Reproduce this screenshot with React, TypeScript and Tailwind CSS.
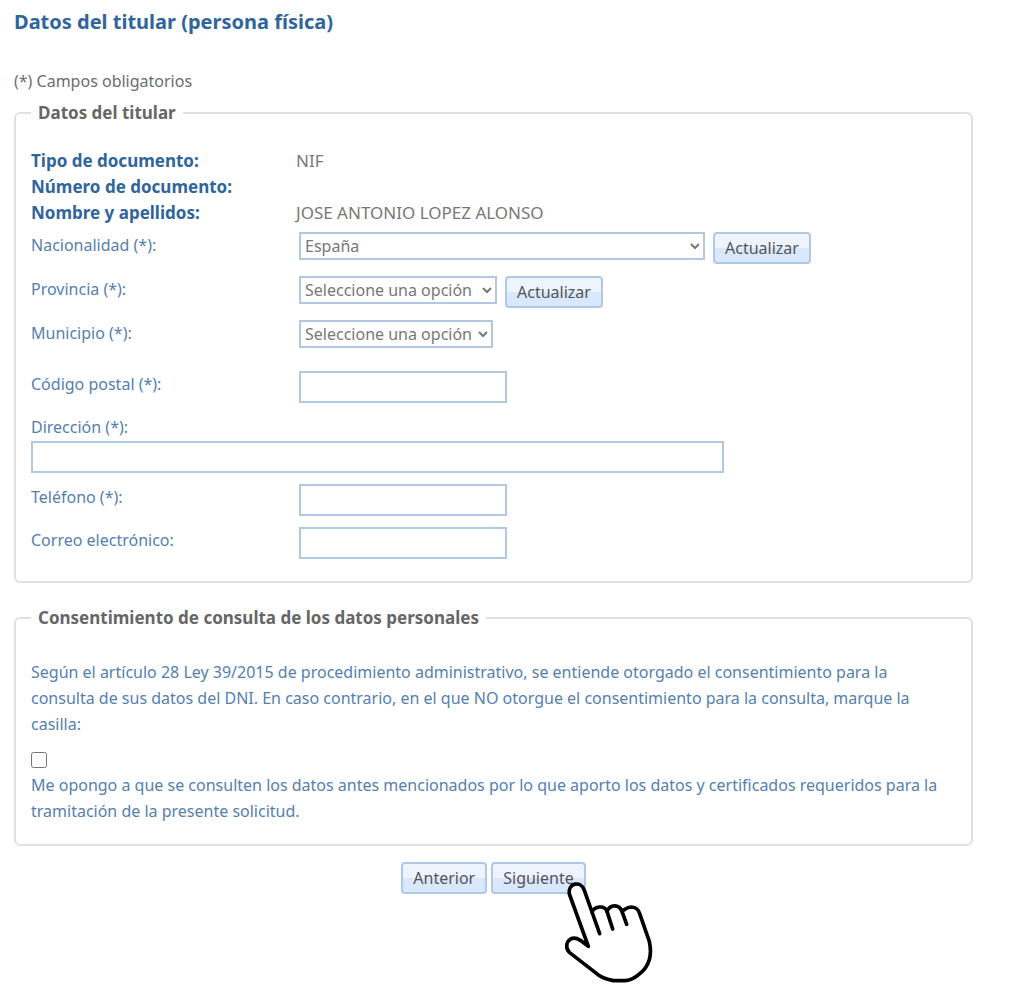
import { useState } from "react";
import type { ReactNode } from "react";

interface FormButtonProps {
  children: ReactNode;
}

const FormButton = ({ children }: FormButtonProps) => (
  <button
    type="button"
    className="h-8 shrink-0 rounded-sm border-2 border-[#b0c8e3] bg-linear-to-b from-[#edf4fe] from-50% to-[#d9e8fc] to-50% px-[10px] text-base leading-6 text-[#555555]"
  >
    {children}
  </button>
);

interface FieldsetProps {
  title: string;
  children: ReactNode;
}

const Fieldset = ({ title, children }: FieldsetProps) => (
  <fieldset className="rounded-md border-2 border-[#e0e0e0] px-[15px] pb-5">
    <legend className="px-[7px] text-[17px] leading-[26px] font-bold text-[#666666]">{title}</legend>
    {children}
  </fieldset>
);

interface FieldProps {
  id: string;
  label: string;
  children: ReactNode;
}

const Field = ({ id, label, children }: FieldProps) => (
  <div className="flex min-h-8 items-start">
    <label htmlFor={id} className="w-[268px] shrink-0">
      {label}
    </label>
    <div className="flex min-w-0 grow items-start gap-2">{children}</div>
  </div>
);

const selectClass = "h-7 min-w-0 rounded-none border-2 border-[#b0c8e3] bg-white text-base text-[#777777]";
const inputClass = "h-8 border-2 border-[#b0c8e3] bg-white px-2 text-[#555555]";

/* Pointing hand over the "Siguiente" button */
const PointingHand = () => (
  <svg
    viewBox="0 0 360 375"
    className="pointer-events-none absolute top-[7px] left-[58px] h-[125px] w-[120px]"
    fill="none"
    stroke="#000"
    strokeWidth="11"
    strokeLinecap="round"
    strokeLinejoin="round"
    aria-hidden="true"
  >
    <path
      fill="#fff"
      d="M118 232 L61 75 C56 41 96 34 106 64 L129 129 C137 112 166 107 174 127 C183 106 210 104 219 127 C230 119 236 114 248 114 C263 115 268 121 272 134 L301 217 C309 254 304 286 276 311 C264 322 249 334 229 335 L193 335 C174 331 161 327 147 317 L61 250 C50 239 50 219 65 210 C77 204 86 209 94 214 Z"
    />
    <path d="M129 129 L152 194 M174 127 L191 180 M219 127 L233 166" />
  </svg>
);

const App = () => {
  const [opposed, setOpposed] = useState(false);

  return (
    <main className="min-h-screen bg-white pt-2 pr-[51px] pb-[100px] pl-[14px] font-['Noto_Sans',sans-serif] text-base leading-[26px] text-[#5580ae]">
      <h1 className="text-xl leading-7 font-bold text-[#30659b]">Datos del titular (persona física)</h1>
      <p className="mt-8 mb-[6px] text-[#6b6b73]">(*) Campos obligatorios</p>

      <form>
        <Fieldset title="Datos del titular">
          <dl className="mt-[22px] grid grid-cols-[265px_1fr] auto-rows-[26px] text-[17px] text-[#777777]">
            <dt className="font-bold text-[#30659b]">Tipo de documento:</dt>
            <dd>NIF</dd>
            <dt className="font-bold text-[#30659b]">Número de documento:</dt>
            <dd></dd>
            <dt className="font-bold text-[#30659b]">Nombre y apellidos:</dt>
            <dd>JOSE ANTONIO LOPEZ ALONSO</dd>
          </dl>

          <div className="mt-[6px] flex flex-col gap-3">
            <Field id="nacionalidad" label="Nacionalidad (*):">
              <select id="nacionalidad" className={`${selectClass} w-[406px]`}>
                <option>España</option>
              </select>
              <FormButton>Actualizar</FormButton>
            </Field>
            <Field id="provincia" label="Provincia (*):">
              <select id="provincia" className={`${selectClass} w-[198px]`}>
                <option>Seleccione una opción</option>
              </select>
              <FormButton>Actualizar</FormButton>
            </Field>
            <Field id="municipio" label="Municipio (*):">
              <select id="municipio" className={`${selectClass} w-[194px]`}>
                <option>Seleccione una opción</option>
              </select>
            </Field>
          </div>

          <div className="mt-[19px] mb-[2px] flex flex-col gap-[11px]">
            <Field id="codigo-postal" label="Código postal (*):">
              <input id="codigo-postal" type="text" className={`${inputClass} w-[208px]`} />
            </Field>
            <div className="flex flex-col gap-px">
              <label htmlFor="direccion">Dirección (*):</label>
              <input id="direccion" type="text" className={`${inputClass} w-full max-w-[693px]`} />
            </div>
            <Field id="telefono" label="Teléfono (*):">
              <input id="telefono" type="tel" className={`${inputClass} w-[208px]`} />
            </Field>
            <Field id="correo" label="Correo electrónico:">
              <input id="correo" type="email" className={`${inputClass} w-[208px]`} />
            </Field>
          </div>
        </Fieldset>

        <div className="mt-[22px]">
          <Fieldset title="Consentimiento de consulta de los datos personales">
            <p className="mt-7 pr-3">
              Según el artículo 28 Ley 39/2015 de procedimiento administrativo, se entiende otorgado el consentimiento
              para la consulta de sus datos del DNI. En caso contrario, en el que NO otorgue el consentimiento para la
              consulta, marque la casilla:
            </p>
            <input
              id="oposicion"
              type="checkbox"
              checked={opposed}
              onChange={(e) => setOpposed(e.target.checked)}
              className="mt-[15px] block size-4"
            />
            <label htmlFor="oposicion" className="mt-1 block">
              Me opongo a que se consulten los datos antes mencionados por lo que aporto los datos y certificados
              requeridos para la tramitación de la presente solicitud.
            </label>
          </Fieldset>
        </div>

        <div className="mt-4 flex justify-center gap-1">
          <FormButton>Anterior</FormButton>
          <div className="relative">
            <FormButton>Siguiente</FormButton>
            <PointingHand />
          </div>
        </div>
      </form>
    </main>
  );
};

export default App;
